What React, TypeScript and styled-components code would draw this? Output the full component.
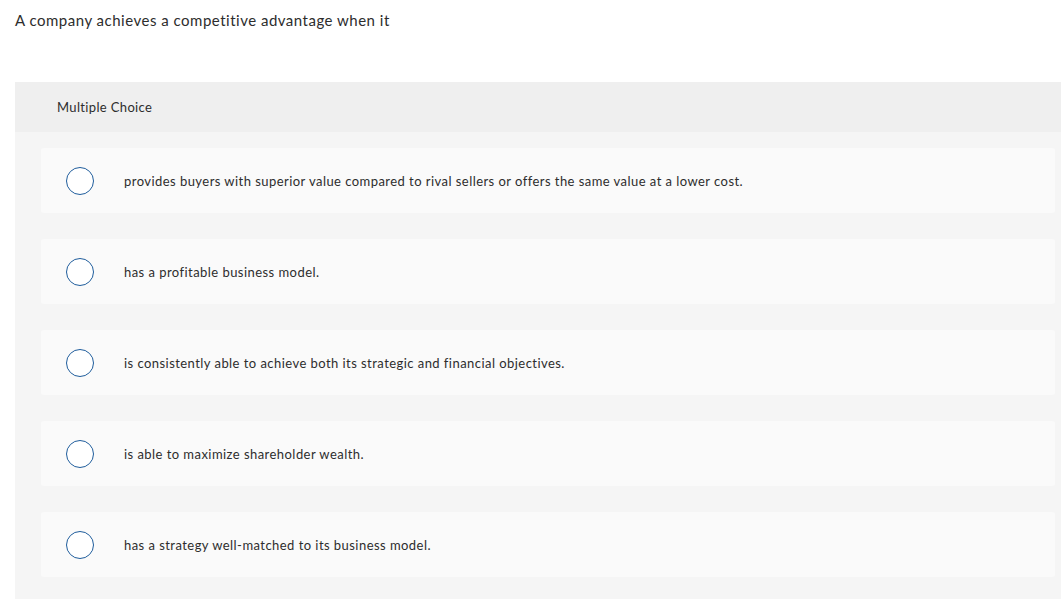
import React from "react";
import styled, { createGlobalStyle } from "styled-components";

const GlobalStyle = createGlobalStyle`
  html, body {
    margin: 0;
    padding: 0;
    background: #ffffff;
    overflow: hidden;
  }
  body {
    font-family: Lato, "Noto Sans", Arial, sans-serif;
    color: #333333;
    font-variant-ligatures: none;
  }
`;

const choices = [
  "provides buyers with superior value compared to rival sellers or offers the same value at a lower cost.",
  "has a profitable business model.",
  "is consistently able to achieve both its strategic and financial objectives.",
  "is able to maximize shareholder wealth.",
  "has a strategy well-matched to its business model.",
];

const App = () => {
  return (
    <Page>
      <GlobalStyle />
      <Question>A company achieves a competitive advantage when it</Question>
      <Panel>
        <Header>Multiple Choice</Header>
        <List>
          {choices.map((text) => (
            <Option key={text}>
              <Radio />
              <Label>{text}</Label>
            </Option>
          ))}
        </List>
      </Panel>
    </Page>
  );
};

export default App;

const Page = styled.div`
  width: 1061px;
  height: 599px;
  padding: 10px 0 0 15px;
  box-sizing: border-box;
`;

const Question = styled.div`
  font-size: 15px;
  line-height: 20px;
  letter-spacing: 0.5px;
  color: #2d2d2d;
  height: 72px;
`;

const Panel = styled.div`
  background: #f5f5f5;
  padding-bottom: 40px;
`;

const Header = styled.div`
  background: #efefef;
  height: 50px;
  display: flex;
  align-items: center;
  padding-left: 42px;
  font-size: 13px;
  letter-spacing: 0.35px;
  color: #2d2d2d;
`;

const List = styled.div`
  display: flex;
  flex-direction: column;
  gap: 26px;
  padding: 16px 6px 0 26px;
`;

const Option = styled.div`
  height: 65px;
  background: #fafafa;
  border-radius: 3px;
  display: flex;
  align-items: center;
  padding-left: 25px;
`;

const Radio = styled.span`
  width: 28px;
  height: 28px;
  box-sizing: border-box;
  border: 1.3px solid #1f5d9c;
  border-radius: 50%;
  background: #ffffff;
  flex-shrink: 0;
`;

const Label = styled.span`
  margin-left: 30px;
  font-size: 13px;
  letter-spacing: 0.45px;
  color: #2d2d2d;
`;
